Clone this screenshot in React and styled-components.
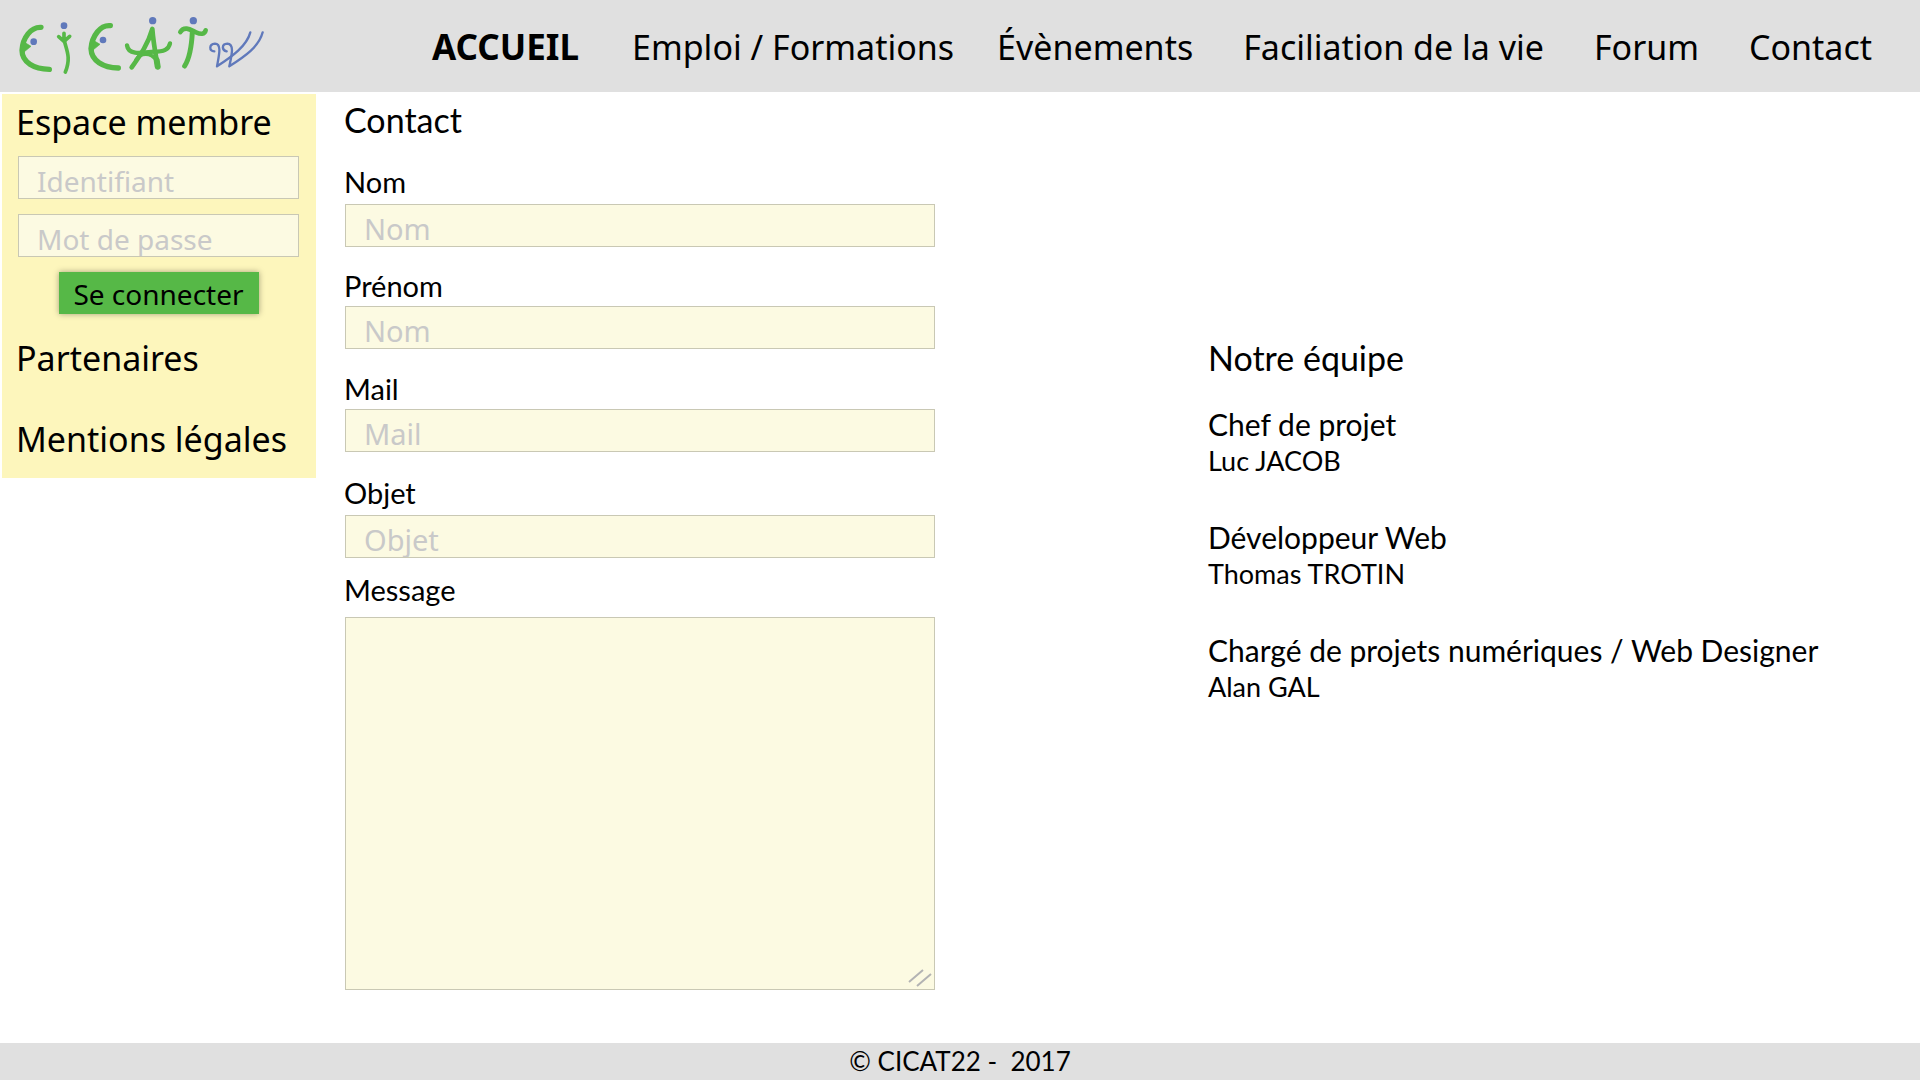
import React from "react";
import styled, { createGlobalStyle } from "styled-components";

const SEGOE = `"Noto Sans", "Open Sans", sans-serif`;
const MYRIAD = `Lato, "Open Sans", sans-serif`;

const GlobalStyle = createGlobalStyle`
  *, *::before, *::after { box-sizing: border-box; }
  body { margin: 0; background: #fff; color: #000; font-family: ${MYRIAD}; }
`;

const Page = styled.div`
  display: flex;
  flex-direction: column;
  min-height: 100vh;
`;

const Header = styled.header`
  display: flex;
  align-items: center;
  justify-content: space-between;
  height: 92px;
  padding: 2px 48px 0 16px;
  background: #e0e0e0;
`;

const LogoLink = styled.a`
  display: block;
  line-height: 0;
`;

const Nav = styled.nav`
  display: flex;
  gap: 43px;
`;

const NavLink = styled.a`
  margin-left: ${(p) => p.$lead}px;
  font: ${(p) => (p.$active ? "700 35px" : "400 34px")}/48px ${SEGOE};
  color: inherit;
  text-decoration: none;
  white-space: nowrap;
`;

const Body = styled.div`
  display: flex;
  align-items: flex-start;
  flex: 1;
`;

const Sidebar = styled.aside`
  flex: none;
  width: 314px;
  margin: 2px 28px 0 2px;
  padding: 5px 14px 16px;
  background: #fdf6bc;
`;

const SideTitle = styled.h2`
  margin: 0;
  font: 400 34px/46px ${SEGOE};
`;

const LoginForm = styled.form`
  display: flex;
  flex-direction: column;
  gap: 15px;
  margin: 11px 0 21px;
  padding: 0 3px 0 2px;
`;

const TextBox = styled.input`
  display: block;
  width: 100%;
  height: 43px;
  padding: 6px 18px 0;
  border: 1px solid #c9c8b4;
  border-radius: 0;
  background: #fcfae2;
  color: #000;
  font: 400 ${(p) => (p.$small ? "28px" : "29px")} ${SEGOE};
  outline-color: #56b847;

  &::placeholder { color: #c9c9c9; opacity: 1; }
`;

const LoginButton = styled.button`
  align-self: center;
  width: 200px;
  height: 42px;
  padding: 3px 0 0;
  border: 0;
  background: #56b847;
  box-shadow: 0 0 6px rgba(0, 0, 0, 0.35);
  color: #000;
  font: 400 28px/39px ${SEGOE};
  cursor: pointer;
`;

const SideLinks = styled.nav`
  display: flex;
  flex-direction: column;
  gap: 35px;
`;

const SideLink = styled.a`
  font: 400 34px/46px ${SEGOE};
  color: inherit;
  text-decoration: none;
  white-space: nowrap;
`;

const Main = styled.main`
  flex: 1;
  display: grid;
  grid-template-columns: minmax(0, 591fr) minmax(0, 712fr);
  column-gap: 273px;
`;

const ContactForm = styled.form`
  padding: 8px 0 53px;
`;

const Title = styled.h1`
  margin: 0;
  font: 400 34px/40px ${MYRIAD};
`;

const Field = styled.div`
  margin-top: ${(p) => p.$space}px;
`;

const Label = styled.label`
  display: block;
  margin-bottom: ${(p) => p.$gap}px;
  font: 400 29px/36px ${MYRIAD};
`;

const Control = styled.div`
  position: relative;
  padding-left: 1px;
`;

const MessageBox = styled.textarea`
  display: block;
  width: 100%;
  height: 373px;
  padding: 6px 18px;
  border: 1px solid #c9c8b4;
  border-radius: 0;
  background: #fcfae2;
  font: 400 29px ${SEGOE};
  resize: none;
  outline-color: #56b847;
`;

const Grip = styled.svg`
  position: absolute;
  right: 3px;
  bottom: 3px;
  pointer-events: none;
`;

const Team = styled.section`
  padding-top: 246px;
`;

const TeamTitle = styled(Title).attrs({ as: "h2" })`
  margin-bottom: 28px;
`;

const TeamList = styled.dl`
  display: grid;
  gap: 39px;
  margin: 0;
`;

const Role = styled.dt`
  font: 400 30px/36px ${MYRIAD};
`;

const Name = styled.dd`
  margin: 0;
  font: 400 27px/38px ${MYRIAD};
`;

const Footer = styled.footer`
  background: #e0e0e0;
  font: 400 26px/37px ${MYRIAD};
  text-align: center;
  white-space: pre;
`;

const links = [
  { text: "ACCUEIL", lead: 0, active: true },
  { text: "Emploi / Formations", lead: 10 },
  { text: "Évènements", lead: 0 },
  { text: "Faciliation de la vie", lead: 7 },
  { text: "Forum", lead: 7 },
  { text: "Contact", lead: 7 },
];

const fields = [
  { id: "nom", label: "Nom", hint: "Nom", space: 24, gap: 4 },
  { id: "prenom", label: "Prénom", hint: "Nom", space: 21, gap: 2 },
  { id: "mail", label: "Mail", hint: "Mail", space: 22, gap: 2, type: "email" },
  { id: "objet", label: "Objet", hint: "Objet", space: 23, gap: 4 },
];

const team = [
  { role: "Chef de projet", name: "Luc JACOB" },
  { role: "Développeur Web", name: "Thomas TROTIN" },
  { role: "Chargé de projets numériques / Web Designer", name: "Alan GAL" },
];

function Logo() {
  return (
    <svg width="250" height="62" viewBox="48 48 750 186" role="img" aria-label="CICAT22">
      <g fill="none" stroke="#56b847" strokeLinecap="round" strokeLinejoin="round">
        <g strokeWidth="16">
          <path d="M123 82C93 80 68 113 66 151C66 187 102 207 148 208" />
          <path d="M331 77C301 74 276 108 273 146C274 182 309 203 355 204" />
        </g>
        <path d="M72 126L93 139L72 156ZM280 121L300 133L279 150Z" fill="#56b847" strokeWidth="2" />
        <path d="M192 100V124M176 110L192 124L209 109" strokeWidth="11" />
        <path d="M193 122C199 150 214 172 196 216" strokeWidth="11" />
        <path d="M395 202C422 164 445 130 457 87C460 128 467 164 473 199" strokeWidth="14" />
        <path d="M381 136C386 171 438 156 461 155C492 155 506 149 510 130" strokeWidth="13" />
        <path d="M408 180C422 156 452 157 469 180" strokeWidth="11" />
        <path d="M470 180L473 200" strokeWidth="18" />
        <path d="M541 96C554 76 574 91 588 97C602 103 614 104 617 91" strokeWidth="14" />
        <path d="M577 96C575 136 568 176 554 198" strokeWidth="15" />
      </g>
      <g fill="#6079bb">
        <circle cx="101" cy="125" r="10" />
        <circle cx="192" cy="77" r="10" />
        <circle cx="309" cy="120" r="10" />
        <circle cx="458" cy="62" r="11" />
        <circle cx="580" cy="62" r="11" />
      </g>
      <g fill="none" stroke="#6079bb" strokeWidth="7" strokeLinecap="round" strokeLinejoin="round">
        <path d="M643 154C627 153 626 133 645 131C666 132 657 165 651 199C698 168 740 138 751 97" />
        <path d="M680 154C665 151 664 132 682 131C704 132 695 166 688 199C736 168 777 140 788 97" />
      </g>
    </svg>
  );
}

export default function App() {
  return (
    <Page>
      <GlobalStyle />
      <Header>
        <LogoLink href="#accueil">
          <Logo />
        </LogoLink>
        <Nav>
          {links.map((l) => (
            <NavLink key={l.text} href="#" $active={l.active} $lead={l.lead}>
              {l.text}
            </NavLink>
          ))}
        </Nav>
      </Header>
      <Body>
        <Sidebar>
          <SideTitle>Espace membre</SideTitle>
          <LoginForm onSubmit={(e) => e.preventDefault()}>
            <TextBox $small aria-label="Identifiant" placeholder="Identifiant" />
            <TextBox $small type="password" aria-label="Mot de passe" placeholder="Mot de passe" />
            <LoginButton>Se connecter</LoginButton>
          </LoginForm>
          <SideLinks>
            <SideLink href="#">Partenaires</SideLink>
            <SideLink href="#">Mentions légales</SideLink>
          </SideLinks>
        </Sidebar>
        <Main>
          <ContactForm onSubmit={(e) => e.preventDefault()}>
            <Title>Contact</Title>
            {fields.map((f) => (
              <Field key={f.id} $space={f.space}>
                <Label htmlFor={f.id} $gap={f.gap}>{f.label}</Label>
                <Control>
                  <TextBox id={f.id} type={f.type || "text"} placeholder={f.hint} />
                </Control>
              </Field>
            ))}
            <Field $space={14}>
              <Label htmlFor="message" $gap={9}>Message</Label>
              <Control>
                <MessageBox id="message" />
                <Grip width="24" height="18" viewBox="0 0 24 18" stroke="#b3b3b3" strokeWidth="2" aria-hidden="true">
                  <path d="M1 13L15 1M9 17L23 5" />
                </Grip>
              </Control>
            </Field>
          </ContactForm>
          <Team>
            <TeamTitle>Notre équipe</TeamTitle>
            <TeamList>
              {team.map((m) => (
                <div key={m.name}>
                  <Role>{m.role}</Role>
                  <Name>{m.name}</Name>
                </div>
              ))}
            </TeamList>
          </Team>
        </Main>
      </Body>
      <Footer>{"© CICAT22 -  2017"}</Footer>
    </Page>
  );
}
